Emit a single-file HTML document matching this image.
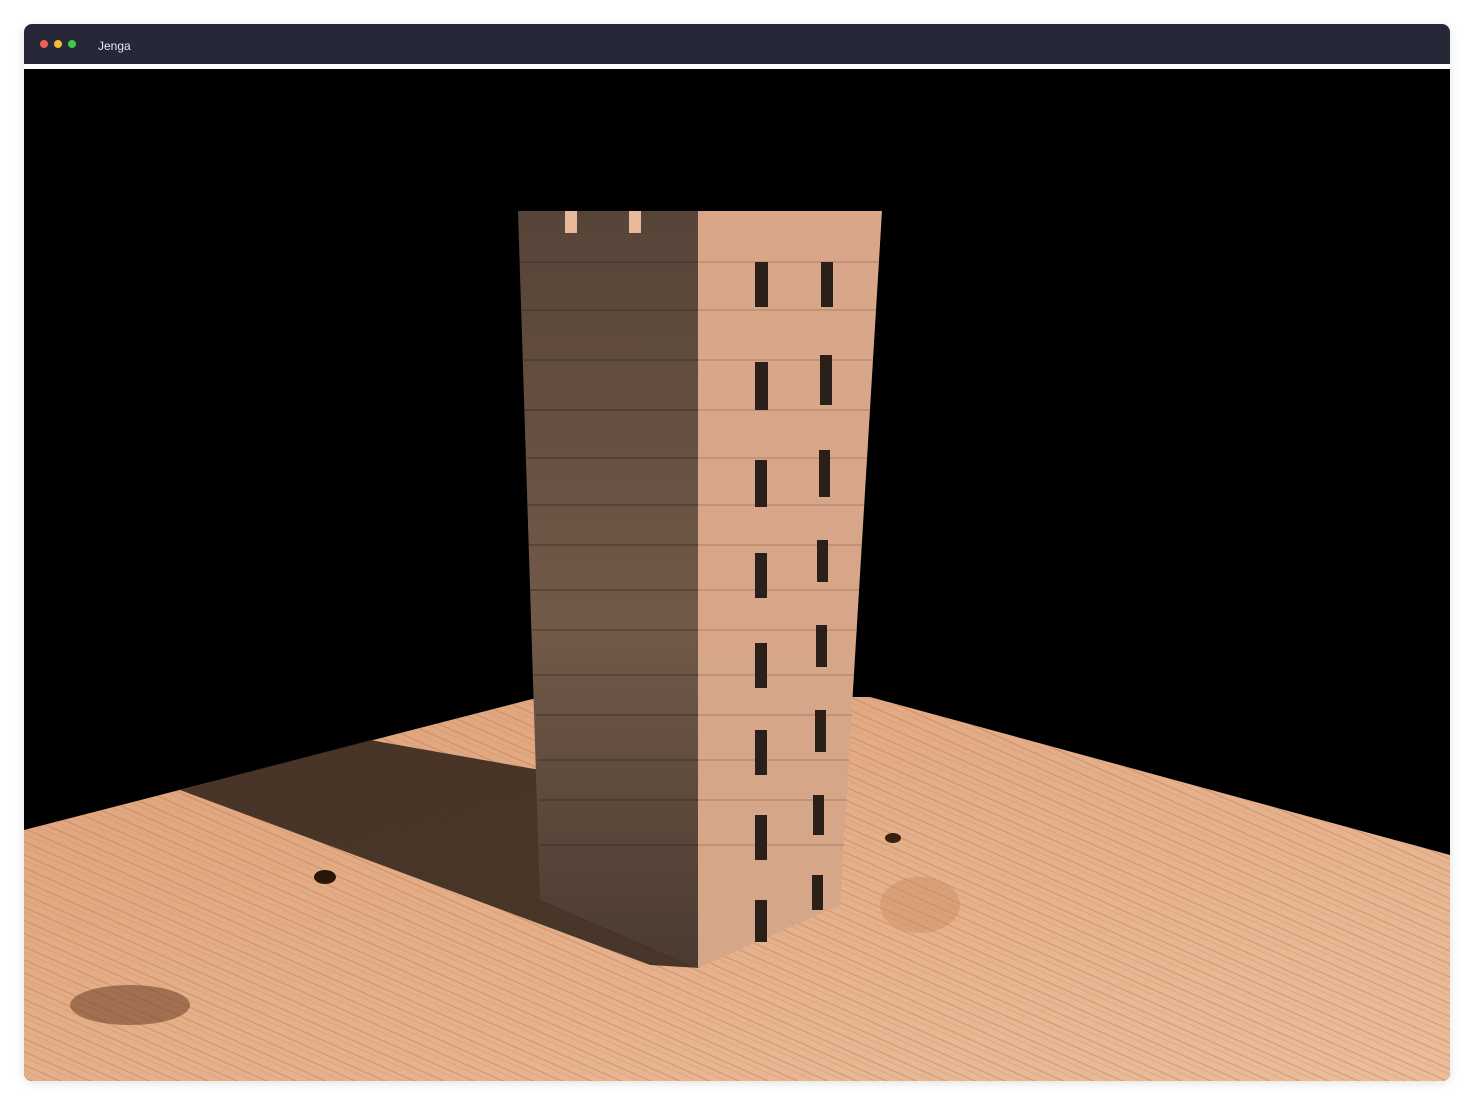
<!DOCTYPE html>
<html><head><meta charset="utf-8"><style>
html,body{margin:0;padding:0;background:#fff;width:1474px;height:1111px;overflow:hidden}
.win{position:absolute;left:24px;top:24px;width:1426px;height:1057px;border-radius:8px;overflow:hidden;box-shadow:0 2px 10px rgba(0,0,0,.12)}
.bar{height:40px;background:#262837;position:relative}
.d{position:absolute;top:16px;width:8px;height:8px;border-radius:50%}
.t{position:absolute;left:74px;top:15px;color:#e8e8ee;font:12px "Liberation Sans",sans-serif}
svg{position:absolute;left:0;top:45px}
</style></head><body>
<div class="win">
<div class="bar"><div class="d" style="left:16px;background:#ee5f57"></div><div class="d" style="left:30px;background:#f3bd2f"></div><div class="d" style="left:44px;background:#3fc94a"></div><div class="t">Jenga</div></div>
<svg width="1426" height="1012" viewBox="24 69 1426 1012">
<defs>
<linearGradient id="fl" x1="0" y1="0" x2="1" y2="1"><stop offset="0" stop-color="#dea27a"/><stop offset="1" stop-color="#ebbd9a"/></linearGradient>
<pattern id="grain" width="60" height="12" patternUnits="userSpaceOnUse" patternTransform="rotate(24)"><line x1="0" y1="3" x2="60" y2="3" stroke="#b87650" stroke-width="1.2" opacity=".45"/><line x1="0" y1="8" x2="60" y2="8" stroke="#c98a62" stroke-width="1" opacity=".35"/></pattern>
<linearGradient id="lf" x1="0" y1="0" x2="0" y2="1"><stop offset="0" stop-color="#574438"/><stop offset=".55" stop-color="#725a49"/><stop offset="1" stop-color="#4a3a30"/></linearGradient>
<linearGradient id="rf" x1="0" y1="0" x2="0" y2="1"><stop offset="0" stop-color="#d9a689"/><stop offset="1" stop-color="#d5a688"/></linearGradient>
</defs>
<rect x="24" y="69" width="1426" height="1012" fill="#000"/>
<polygon points="24,830 540,697 870,697 1450,855 1450,1081 24,1081" fill="url(#fl)"/>
<polygon points="24,830 540,697 870,697 1450,855 1450,1081 24,1081" fill="url(#grain)"/>
<polygon points="180,790 370,740 540,770 540,895 700,968 650,965" fill="#2e2119" opacity=".85"/>
<ellipse cx="325" cy="877" rx="11" ry="7" fill="#2a1608"/>
<ellipse cx="893" cy="838" rx="8" ry="5" fill="#3a200e"/>
<ellipse cx="920" cy="905" rx="40" ry="28" fill="#c9865a" opacity=".4"/>
<ellipse cx="130" cy="1005" rx="60" ry="20" fill="#6a3e22" opacity=".55"/>
<polygon points="518,211 698,211 698,968 540,900" fill="url(#lf)"/>
<polygon points="698,211 882,211 840,905 698,968" fill="url(#rf)"/>
<rect x="565" y="211" width="12" height="22" fill="#e9b99a"/><rect x="629" y="211" width="12" height="22" fill="#e9b99a"/>
<g stroke="#3a2c24" stroke-width="2" opacity=".4">
<line x1="520" y1="262" x2="698" y2="262"/><line x1="521" y1="310" x2="698" y2="310"/><line x1="522" y1="360" x2="698" y2="360"/><line x1="524" y1="410" x2="698" y2="410"/><line x1="525" y1="458" x2="698" y2="458"/><line x1="527" y1="505" x2="698" y2="505"/><line x1="529" y1="545" x2="698" y2="545"/><line x1="530" y1="590" x2="698" y2="590"/><line x1="532" y1="630" x2="698" y2="630"/><line x1="534" y1="675" x2="698" y2="675"/><line x1="536" y1="715" x2="698" y2="715"/><line x1="538" y1="760" x2="698" y2="760"/><line x1="539" y1="800" x2="698" y2="800"/><line x1="540" y1="845" x2="698" y2="845"/>
</g>
<g stroke="#b07e62" stroke-width="2" opacity=".5">
<line x1="698" y1="262" x2="879" y2="262"/><line x1="698" y1="310" x2="876" y2="310"/><line x1="698" y1="360" x2="873" y2="360"/><line x1="698" y1="410" x2="870" y2="410"/><line x1="698" y1="458" x2="867" y2="458"/><line x1="698" y1="505" x2="864" y2="505"/><line x1="698" y1="545" x2="862" y2="545"/><line x1="698" y1="590" x2="859" y2="590"/><line x1="698" y1="630" x2="857" y2="630"/><line x1="698" y1="675" x2="854" y2="675"/><line x1="698" y1="715" x2="852" y2="715"/><line x1="698" y1="760" x2="849" y2="760"/><line x1="698" y1="800" x2="846" y2="800"/><line x1="698" y1="845" x2="844" y2="845"/>
</g>
<g fill="#2a1f19">
<rect x="755" y="262" width="13" height="45"/><rect x="821" y="262" width="12" height="45"/>
<rect x="755" y="362" width="13" height="48"/><rect x="820" y="355" width="12" height="50"/>
<rect x="755" y="460" width="12" height="47"/><rect x="819" y="450" width="11" height="47"/>
<rect x="755" y="553" width="12" height="45"/><rect x="817" y="540" width="11" height="42"/>
<rect x="755" y="643" width="12" height="45"/><rect x="816" y="625" width="11" height="42"/>
<rect x="755" y="730" width="12" height="45"/><rect x="815" y="710" width="11" height="42"/>
<rect x="755" y="815" width="12" height="45"/><rect x="813" y="795" width="11" height="40"/>
<rect x="755" y="900" width="12" height="42"/><rect x="812" y="875" width="11" height="35"/>
</g>
</svg>
</div>
</body></html>
